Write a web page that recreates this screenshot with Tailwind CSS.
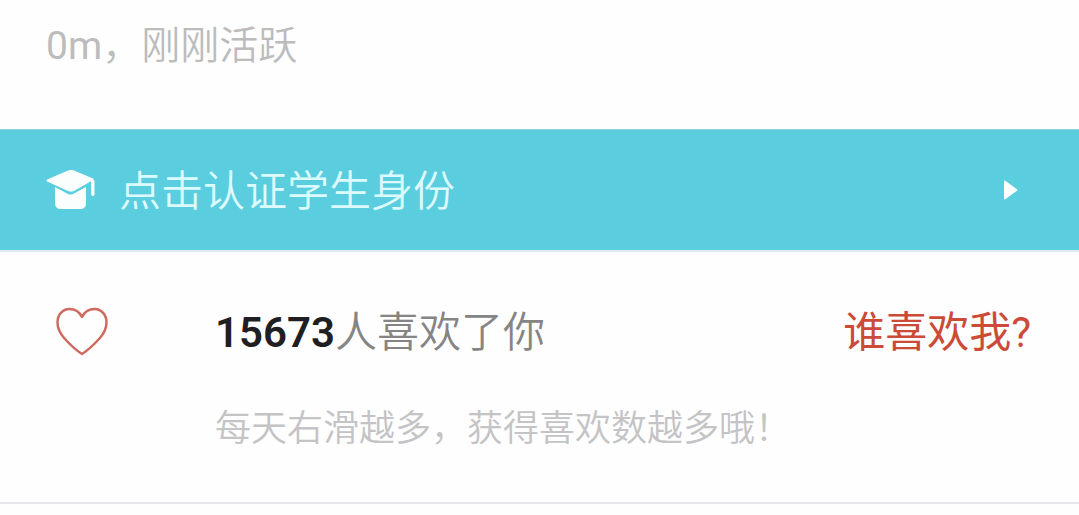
<!DOCTYPE html>
<html lang="zh-CN">
<head>
    <meta charset="UTF-8">
    <meta name="viewport" content="width=device-width, initial-scale=1.0">
    <title>个人主页</title>
    <script src="https://cdn.jsdelivr.net/npm/@tailwindcss/browser@4"></script>
</head>
<body class="bg-[#fefefe] font-['Roboto','Noto_Sans_CJK_SC',sans-serif]">
    <p class="px-[46px] pt-4 pb-[53px] text-[39px] leading-[60px] font-[350] text-[#bcbcbc]"><span class="font-normal">0m</span>，刚刚活跃</p>

    <!-- student verification -->
    <a href="#verify" class="flex items-center justify-between bg-[#5acddf] border-t border-[#8fcfd5] pl-[45px] pr-[60px] h-[121px] text-[#dcfbff]">
        <span class="flex items-center gap-[23px]">
            <svg class="w-[51px] h-[42px]" viewBox="0 0 51 42" fill="#fafffe" aria-hidden="true">
                <path d="M10 18v16q0 6 6 6h19q6 0 6-6V18l-13 7q-2.500 1-5 0z"/>
                <path d="M2 10 23 1q3-1.200 6 0l19 8q3 1 0 2.600L29 22.500q-3 1.500-6 0L2 13q-2-1.400 0-3z" stroke="#5acddf" stroke-width="1"/>
                <path d="M46 10.500q3 0 3.500 2V26q-1.700 1.800-3.200 0z"/>
            </svg>
            <span class="pt-1 text-[42px] leading-[60px] font-[350]">点击认证学生身份</span>
        </span>
        <svg class="w-4 h-5" viewBox="0 0 16 20" fill="#fff" aria-hidden="true">
            <path d="M1 1.500q0-1.500 1.300-.7L14 9.200q1 .8 0 1.600L2.300 19.200Q1 20 1 18.500z"/>
        </svg>
    </a>

    <!-- likes -->
    <section class="flex items-start border-t-2 border-b-2 border-t-[#dcecf5] border-b-[#e8e6ea] pl-[55px] pr-12 pt-[51px] pb-[43px]">
        <svg class="w-[54px] h-[50px] mt-1 mr-[106px] shrink-0" viewBox="0 0 54 50" fill="none" stroke="#cf6a60" stroke-width="2.500" stroke-linejoin="round" aria-hidden="true">
            <path d="M27 10C24.500 5 20 2 14.500 2 7.500 2 2.500 8 2.500 15.500c0 6 2.500 11 7 16C14.500 37 21.500 43.500 27 47 32.500 43.500 39.500 37 44.500 31.500c4.500-5 7-10 7-16C51.500 8 46.500 2 39.500 2 34 2 29.500 5 27 10z"/>
        </svg>
        <div class="grow">
            <div class="flex justify-between text-[42px] leading-[60px]">
                <p class="font-[350] text-[#858585]"><strong class="font-semibold text-[#1f1f22]">15673</strong>人喜欢了你</p>
                <a href="#likes" class="text-[#cc4a38]">谁喜欢我?</a>
            </div>
            <p class="mt-9 text-4xl leading-[60px] font-[350] text-[#c4c3c5]">每天右滑越多，获得喜欢数越多哦！</p>
        </div>
    </section>
</body>
</html>
